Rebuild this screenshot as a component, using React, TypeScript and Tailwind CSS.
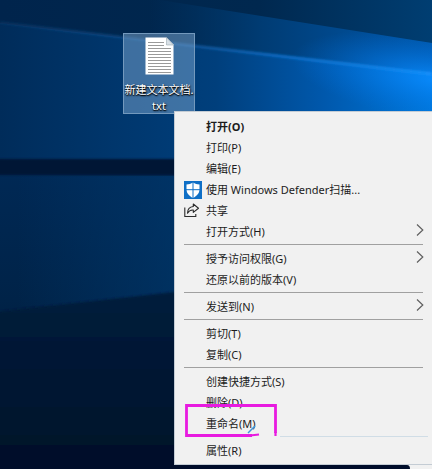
import { Fragment, type ReactNode } from "react";

type Item = { label: string; icon?: ReactNode; submenu?: boolean; bold?: boolean };

function DefenderIcon() {
  return (
    <svg viewBox="0 0 18 18" className="size-[18px] shrink-0" aria-hidden="true">
      <rect width="18" height="18" fill="#0f6fc6" />
      <path d="M9 1.500c2 1.300 4 1.900 6.500 1.900V8c0 4.200-2.500 7-6.500 8.900C5 15 2.500 12.200 2.500 8V3.400C5 3.400 7 2.800 9 1.500Z" fill="#fff" />
      <path d="M9 1v16M2 8.700h14" stroke="#0f6fc6" strokeWidth="1" />
    </svg>
  );
}

function ShareIcon() {
  return (
    <svg viewBox="0 0 16 16" className="size-4 shrink-0" fill="none" stroke="#2b2b2b" strokeWidth="1.100" aria-hidden="true">
      <path d="M.8 4.500v9h11v-2.500" />
      <path d="M9.300 1 14.500 5.200l-5.200 4.200V7C6.500 6.800 4.700 8 3.500 10.200 3.600 6.400 5.600 3.800 9.300 3.500Z" strokeLinejoin="round" />
    </svg>
  );
}

function Chevron() {
  return (
    <svg viewBox="0 0 8 14" className="mb-[3px] h-[14px] w-2 shrink-0" fill="none" stroke="#606060" strokeWidth="1.200" aria-hidden="true">
      <path d="m1 1.500 5.800 5.500L1 12.500" />
    </svg>
  );
}

const groups: Item[][] = [
  [
    { label: "打开(O)", bold: true },
    { label: "打印(P)" },
    { label: "编辑(E)" },
    { label: "使用 Windows Defender扫描...", icon: <DefenderIcon /> },
    { label: "共享", icon: <ShareIcon /> },
    { label: "打开方式(H)", submenu: true },
  ],
  [{ label: "授予访问权限(G)", submenu: true }, { label: "还原以前的版本(V)" }],
  [{ label: "发送到(N)", submenu: true }],
  [{ label: "剪切(T)" }, { label: "复制(C)" }],
  [{ label: "创建快捷方式(S)" }, { label: "删除(D)" }, { label: "重命名(M)" }],
  [{ label: "属性(R)" }],
];

function Wallpaper() {
  return (
    <svg className="absolute inset-0 size-full" viewBox="0 0 432 469" preserveAspectRatio="none" aria-hidden="true">
      <defs>
        <linearGradient id="base" x1="0" y1="0" x2="0" y2="1">
          <stop offset="0" stopColor="#00244c" />
          <stop offset=".3" stopColor="#002a58" />
          <stop offset=".64" stopColor="#002348" />
          <stop offset="1" stopColor="#00102a" />
        </linearGradient>
        <linearGradient id="sky" x1="0" y1="0" x2="1" y2="0">
          <stop offset="0" stopColor="#00244c" />
          <stop offset=".6" stopColor="#00284f" />
          <stop offset="1" stopColor="#003e72" />
        </linearGradient>
        <linearGradient id="upper" gradientUnits="userSpaceOnUse" x1="150" y1="0" x2="432" y2="0">
          <stop offset="0" stopColor="#003668" stopOpacity="0" />
          <stop offset=".4" stopColor="#003c74" />
          <stop offset="1" stopColor="#0058ac" />
        </linearGradient>
        <linearGradient id="lower" x1="0" y1="0" x2="1" y2="0">
          <stop offset="0" stopColor="#002c5a" />
          <stop offset=".5" stopColor="#003f7c" />
          <stop offset=".75" stopColor="#0058ac" />
          <stop offset="1" stopColor="#0078dc" />
        </linearGradient>
        <linearGradient id="beam" gradientUnits="userSpaceOnUse" x1="0" y1="0" x2="432" y2="0">
          <stop offset="0" stopColor="#1c5590" stopOpacity=".25" />
          <stop offset=".4" stopColor="#185a9e" stopOpacity=".7" />
          <stop offset=".65" stopColor="#1070cc" />
          <stop offset="1" stopColor="#1a94ff" />
        </linearGradient>
        <radialGradient id="glow" gradientUnits="userSpaceOnUse" cx="0" cy="0" r="1" gradientTransform="translate(440 80) rotate(9) scale(150 44)">
          <stop offset="0" stopColor="#0a8cff" stopOpacity=".9" />
          <stop offset="1" stopColor="#0070e0" stopOpacity="0" />
        </radialGradient>
        <linearGradient id="floor" gradientUnits="userSpaceOnUse" x1="0" y1="292" x2="0" y2="469">
          <stop offset="0" stopColor="#001d3c" />
          <stop offset="1" stopColor="#001029" />
        </linearGradient>
        <linearGradient id="pane" x1="0" y1="0" x2="1" y2="0">
          <stop offset=".1" stopColor="#003a70" stopOpacity="0" />
          <stop offset="1" stopColor="#003a70" stopOpacity=".6" />
        </linearGradient>
        <filter id="soft"><feGaussianBlur stdDeviation="1" /></filter>
      </defs>
      <rect width="432" height="469" fill="url(#base)" />
      <rect width="432" height="80" fill="url(#sky)" />
      <path d="M160 0 432 43V80L150 45V0Z" fill="url(#upper)" />
      <path d="M0 23 195 46 432 75V160H0Z" fill="url(#lower)" />
      <path d="M250 15 432 43V125H250Z" fill="url(#glow)" />
      <path d="M0 22.500 195 46 432 74" fill="none" stroke="url(#beam)" strokeWidth="2.500" filter="url(#soft)" />
      <rect x="-5" y="159" width="442" height="16" fill="#001836" filter="url(#soft)" />
      <rect y="176" width="174" height="130" fill="url(#pane)" />
      <path d="M-5 312 174 292 437 262V474H-5Z" fill="url(#floor)" filter="url(#soft)" />
      <path d="M410 469q0-4-3-4h25v4Z" fill="#f1f1f1" />
    </svg>
  );
}

function TextFile() {
  return (
    <button className="absolute top-[33px] left-[123px] flex h-[81px] w-[72px] flex-col items-center border border-[#7399bd] bg-[#8ab4dc]/45 pt-[3px] text-[11px] leading-4 text-white [text-shadow:1px_1px_2px_#000,0_1px_1px_#000]">
      <svg viewBox="0 0 29 38" className="mb-[7px] h-[38px] w-[29px] shrink-0" aria-hidden="true">
        <path d="M.5.5h21l7 7v30H.5Z" fill="#fff" />
        <path d="M21.500.5v7.500h7Z" fill="#d8e0e6" stroke="#9ba7b0" strokeWidth=".6" />
        <path d="M3 5.500h16M3 8.500h16M3 11.500h23M3 14.500h23M3 17.500h23M3 20.500h23M3 23.500h23M3 26.500h23M3 29.500h23M3 32.500h23M3 35.500h23" stroke="#999" strokeWidth="1" />
      </svg>
      <span className="whitespace-nowrap">新建文本文档.</span>
      <span>txt</span>
    </button>
  );
}

function MenuRow({ item }: { item: Item }) {
  return (
    <button role="menuitem" className="flex h-[21px] w-full items-center pr-2 pl-[9px] text-left hover:bg-white">
      <span className="flex w-[22px] shrink-0">{item.icon}</span>
      <span className={item.bold ? "flex-1 font-bold whitespace-nowrap" : "flex-1 whitespace-nowrap"}>{item.label}</span>
      {item.submenu && <Chevron />}
    </button>
  );
}

export default function App() {
  return (
    <main className="relative min-h-screen overflow-hidden bg-[#00102a] font-['Noto_Sans','Noto_Sans_CJK_SC',sans-serif]">
      <Wallpaper />
      <TextFile />
      <div role="menu" className="absolute top-[111px] right-0 left-[174px] border border-r-0 border-[#c4ccd4] bg-[#f1f1f1] pt-1 pb-[3px] text-[11px] leading-[21px] text-[#1c1c1c]">
        {groups.map((group, index) => (
          <Fragment key={group[0].label}>
            {index > 0 && (
              <hr className={index === groups.length - 1 ? "mt-[2px] mr-1 mb-[3px] ml-[105px] border-[#d0dde6]" : "mt-[2px] mr-[9px] mb-[3px] ml-[9px] border-[#a0a0a0]"} />
            )}
            {group.map((item) => (
              <MenuRow key={item.label} item={item} />
            ))}
          </Fragment>
        ))}
      </div>
      <svg className="pointer-events-none absolute top-[403px] left-[184px] h-[36px] w-[96px]" viewBox="0 0 96 36" fill="none" aria-hidden="true">
        <path d="M91.500 30V2.500H2.500V32.500H68" stroke="#e81be0" strokeWidth="2.800" />
        <path d="M66 32.500 75 31.500M91.500 29v4" stroke="#e81be0" strokeWidth="2.200" />
        <path d="m64 30 7-7" stroke="#3b96dc" strokeWidth="1.500" />
      </svg>
    </main>
  );
}
